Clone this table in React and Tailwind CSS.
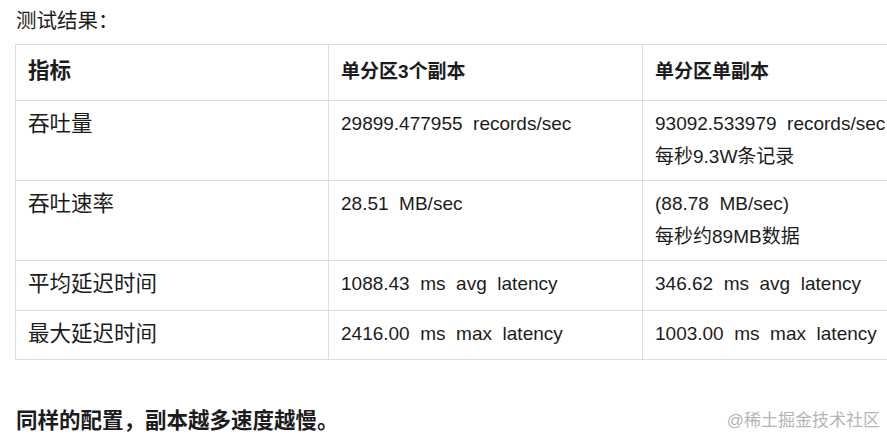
import React from 'react';

const rows = [
  { label: '吞吐量', a: ['29899.477955  records/sec'], b: ['93092.533979  records/sec', '每秒9.3W条记录'], h: 'h-[80px]' },
  { label: '吞吐速率', a: ['28.51  MB/sec'], b: ['(88.78  MB/sec)', '每秒约89MB数据'], h: 'h-[80px]' },
  { label: '平均延迟时间', a: ['1088.43  ms  avg  latency'], b: ['346.62  ms  avg  latency'], h: 'h-[50px]' },
  { label: '最大延迟时间', a: ['2416.00  ms  max  latency'], b: ['1003.00  ms  max  latency'], h: 'h-[49px]' },
];

const App = () => {
  return (
    <div className="relative w-[887px] h-[439px] overflow-hidden bg-white pl-[15px] text-[#1c1c1c] font-['Liberation_Sans','Noto_Sans_CJK_SC',sans-serif]">
      <p className="pt-[4px] pl-px text-[20.5px] leading-[33px]">测试结果：</p>

      {/* results table, wider than the viewport so the last column is cut off */}
      <table className="mt-[7px] w-[941px] table-fixed border-collapse">
        <colgroup>
          <col className="w-[313px]" />
          <col className="w-[314px]" />
          <col className="w-[314px]" />
        </colgroup>
        <thead>
          <tr className="h-[56px]">
            <th className="border border-[#dddddd] px-[12px] pt-[10px] align-top text-left text-[21.5px] leading-[33px] font-bold">指标</th>
            <th className="border border-[#dddddd] px-[12px] pt-[10px] align-top text-left text-[19px] leading-[33px] font-bold">单分区3个副本</th>
            <th className="border border-[#dddddd] px-[12px] pt-[10px] align-top text-left text-[19px] leading-[33px] font-bold">单分区单副本</th>
          </tr>
        </thead>
        <tbody>
          {rows.map((r) => (
            <tr key={r.label} className={r.h}>
              <td className="border border-[#dddddd] px-[12px] pt-[7px] align-top text-[21.5px] leading-[33px]">{r.label}</td>
              <td className="border border-[#dddddd] px-[12px] pt-[6px] align-top text-[19px] leading-[33px] whitespace-pre">
                {r.a.map((t) => (
                  <div key={t}>{t}</div>
                ))}
              </td>
              <td className="border border-[#dddddd] px-[12px] pt-[6px] align-top text-[19px] leading-[33px] whitespace-pre">
                {r.b.map((t) => (
                  <div key={t}>{t}</div>
                ))}
              </td>
            </tr>
          ))}
        </tbody>
      </table>

      <p className="mt-[45px] pl-px text-[21.5px] leading-[33px] font-bold">同样的配置，副本越多速度越慢。</p>

      <span className="absolute right-[7px] bottom-[6px] text-[17px] leading-[24px] text-[#b5b5b5]">@稀土掘金技术社区</span>
    </div>
  );
};

export default App;
